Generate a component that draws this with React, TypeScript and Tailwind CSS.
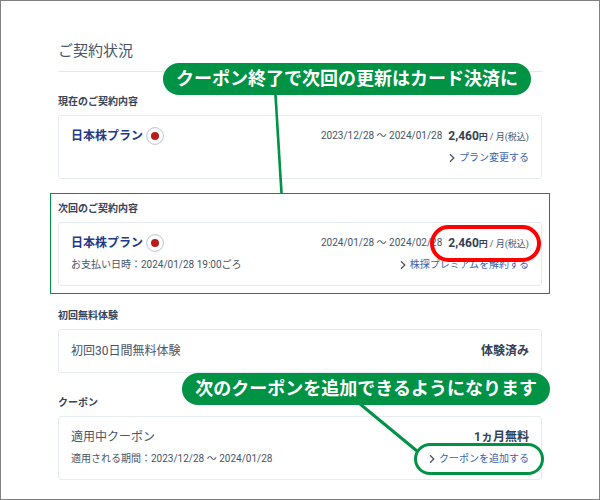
import type { ReactNode } from 'react'

type SectionProps = {
  title: string
  highlighted?: boolean
  children: ReactNode
}

type LinkProps = {
  label: string
}

type PlanProps = {
  period: string
  price: string
  circled?: boolean
}

function Section({ title, highlighted, children }: SectionProps) {
  return (
    <section className="relative">
      {highlighted && <div className="pointer-events-none absolute -inset-2 border border-[#009245]" />}
      <h2 className="mb-[5px] text-[10px] leading-4 font-bold text-[#374357]">{title}</h2>
      {children}
    </section>
  )
}

function Card({ children }: { children: ReactNode }) {
  return <div className="flex flex-col gap-0.5 rounded-[3px] border border-[#e6ebf3] px-3 py-[10px] text-[10px] leading-5">{children}</div>
}

function ArrowLink({ label }: LinkProps) {
  return (
    <a href="#" className="flex items-center gap-1 text-[#3a63b0]">
      <svg width="6" height="10" viewBox="0 0 6 10" fill="none" stroke="#4b5563" strokeWidth="1.3">
        <path d="M1 1.2 4.8 5 1 8.8" />
      </svg>
      {label}
    </a>
  )
}

function PlanRow({ period, price, circled }: PlanProps) {
  return (
    <div className="flex h-5 items-center justify-between">
      <div className="flex items-center gap-[3px]">
        <span className="text-xs leading-5 font-bold text-[#1e3a8a]">日本株プラン</span>
        <svg width="18" height="18" viewBox="0 0 18 18">
          <circle cx="9" cy="9" r="8.4" fill="#fff" stroke="#b9c3d8" strokeWidth="1" />
          <circle cx="9" cy="9" r="4" fill="#b91c1c" />
        </svg>
      </div>
      <div className="flex items-center gap-1.5">
        <span>{period}</span>
        <span className="relative flex items-baseline text-[9px] leading-5">
          <b className="text-xs leading-5 text-[#334155]">{price}</b>
          <b className="text-[#334155]">円</b>
          <span className="ml-0.5">/ 月(税込)</span>
          {circled && <span className="pointer-events-none absolute -inset-y-2 -right-3 -left-[18px] rounded-full border-4 border-[#ff0000]" />}
        </span>
      </div>
    </div>
  )
}

function App() {
  return (
    <main className="flex min-h-screen flex-col gap-[22px] border border-[#808080] bg-white px-[57px] pt-[38px] pb-4 font-['Roboto','Noto_Sans_CJK_JP',sans-serif] text-[#475569]">
      <header className="relative border-b border-[#e5e7eb] pb-2">
        <h1 className="text-[15px] leading-6">ご契約状況</h1>
        <div className="absolute top-6 left-[105px] z-10">
          <svg className="absolute top-full left-[110px]" width="12" height="98" viewBox="0 0 12 98">
            <path d="M2.5 0 8.5 98" stroke="#009245" strokeWidth="2.6" />
          </svg>
          <p className="relative rounded-full bg-[#009245] px-[13px] text-lg leading-8 font-bold whitespace-nowrap text-white">
            クーポン終了で次回の更新はカード決済に
          </p>
        </div>
      </header>

      <Section title="現在のご契約内容">
        <Card>
          <PlanRow period="2023/12/28 〜 2024/01/28" price="2,460" />
          <div className="flex justify-end">
            <ArrowLink label="プラン変更する" />
          </div>
        </Card>
      </Section>

      <Section title="次回のご契約内容" highlighted>
        <Card>
          <PlanRow period="2024/01/28 〜 2024/02/28" price="2,460" circled />
          <div className="flex justify-between">
            <span>お支払い日時：2024/01/28 19:00ごろ</span>
            <ArrowLink label="株探プレミアムを解約する" />
          </div>
        </Card>
      </Section>

      <Section title="初回無料体験">
        <Card>
          <div className="flex justify-between text-xs leading-[22px]">
            <span>初回30日間無料体験</span>
            <b className="text-[#334155]">体験済み</b>
          </div>
        </Card>
      </Section>

      <Section title="クーポン">
        <div className="absolute -right-2 bottom-[75px] z-10">
          <svg className="absolute top-full left-[177px]" width="62" height="50" viewBox="0 0 62 50" overflow="visible">
            <path d="M1 -1 58 46" stroke="#009245" strokeWidth="3" />
          </svg>
          <p className="relative rounded-full bg-[#009245] px-[13px] text-lg leading-8 font-bold whitespace-nowrap text-white">
            次のクーポンを追加できるようになります
          </p>
        </div>
        <Card>
          <div className="flex justify-between text-xs leading-5">
            <span>適用中クーポン</span>
            <b className="text-[#334155]">1ヵ月無料</b>
          </div>
          <div className="flex justify-between">
            <span>適用される期間：2023/12/28 〜 2024/01/28</span>
            <span className="relative">
              <ArrowLink label="クーポンを追加する" />
              <span className="pointer-events-none absolute -inset-x-[15px] -inset-y-1.5 rounded-full border-3 border-[#009245]" />
            </span>
          </div>
        </Card>
      </Section>
    </main>
  )
}

export default App
